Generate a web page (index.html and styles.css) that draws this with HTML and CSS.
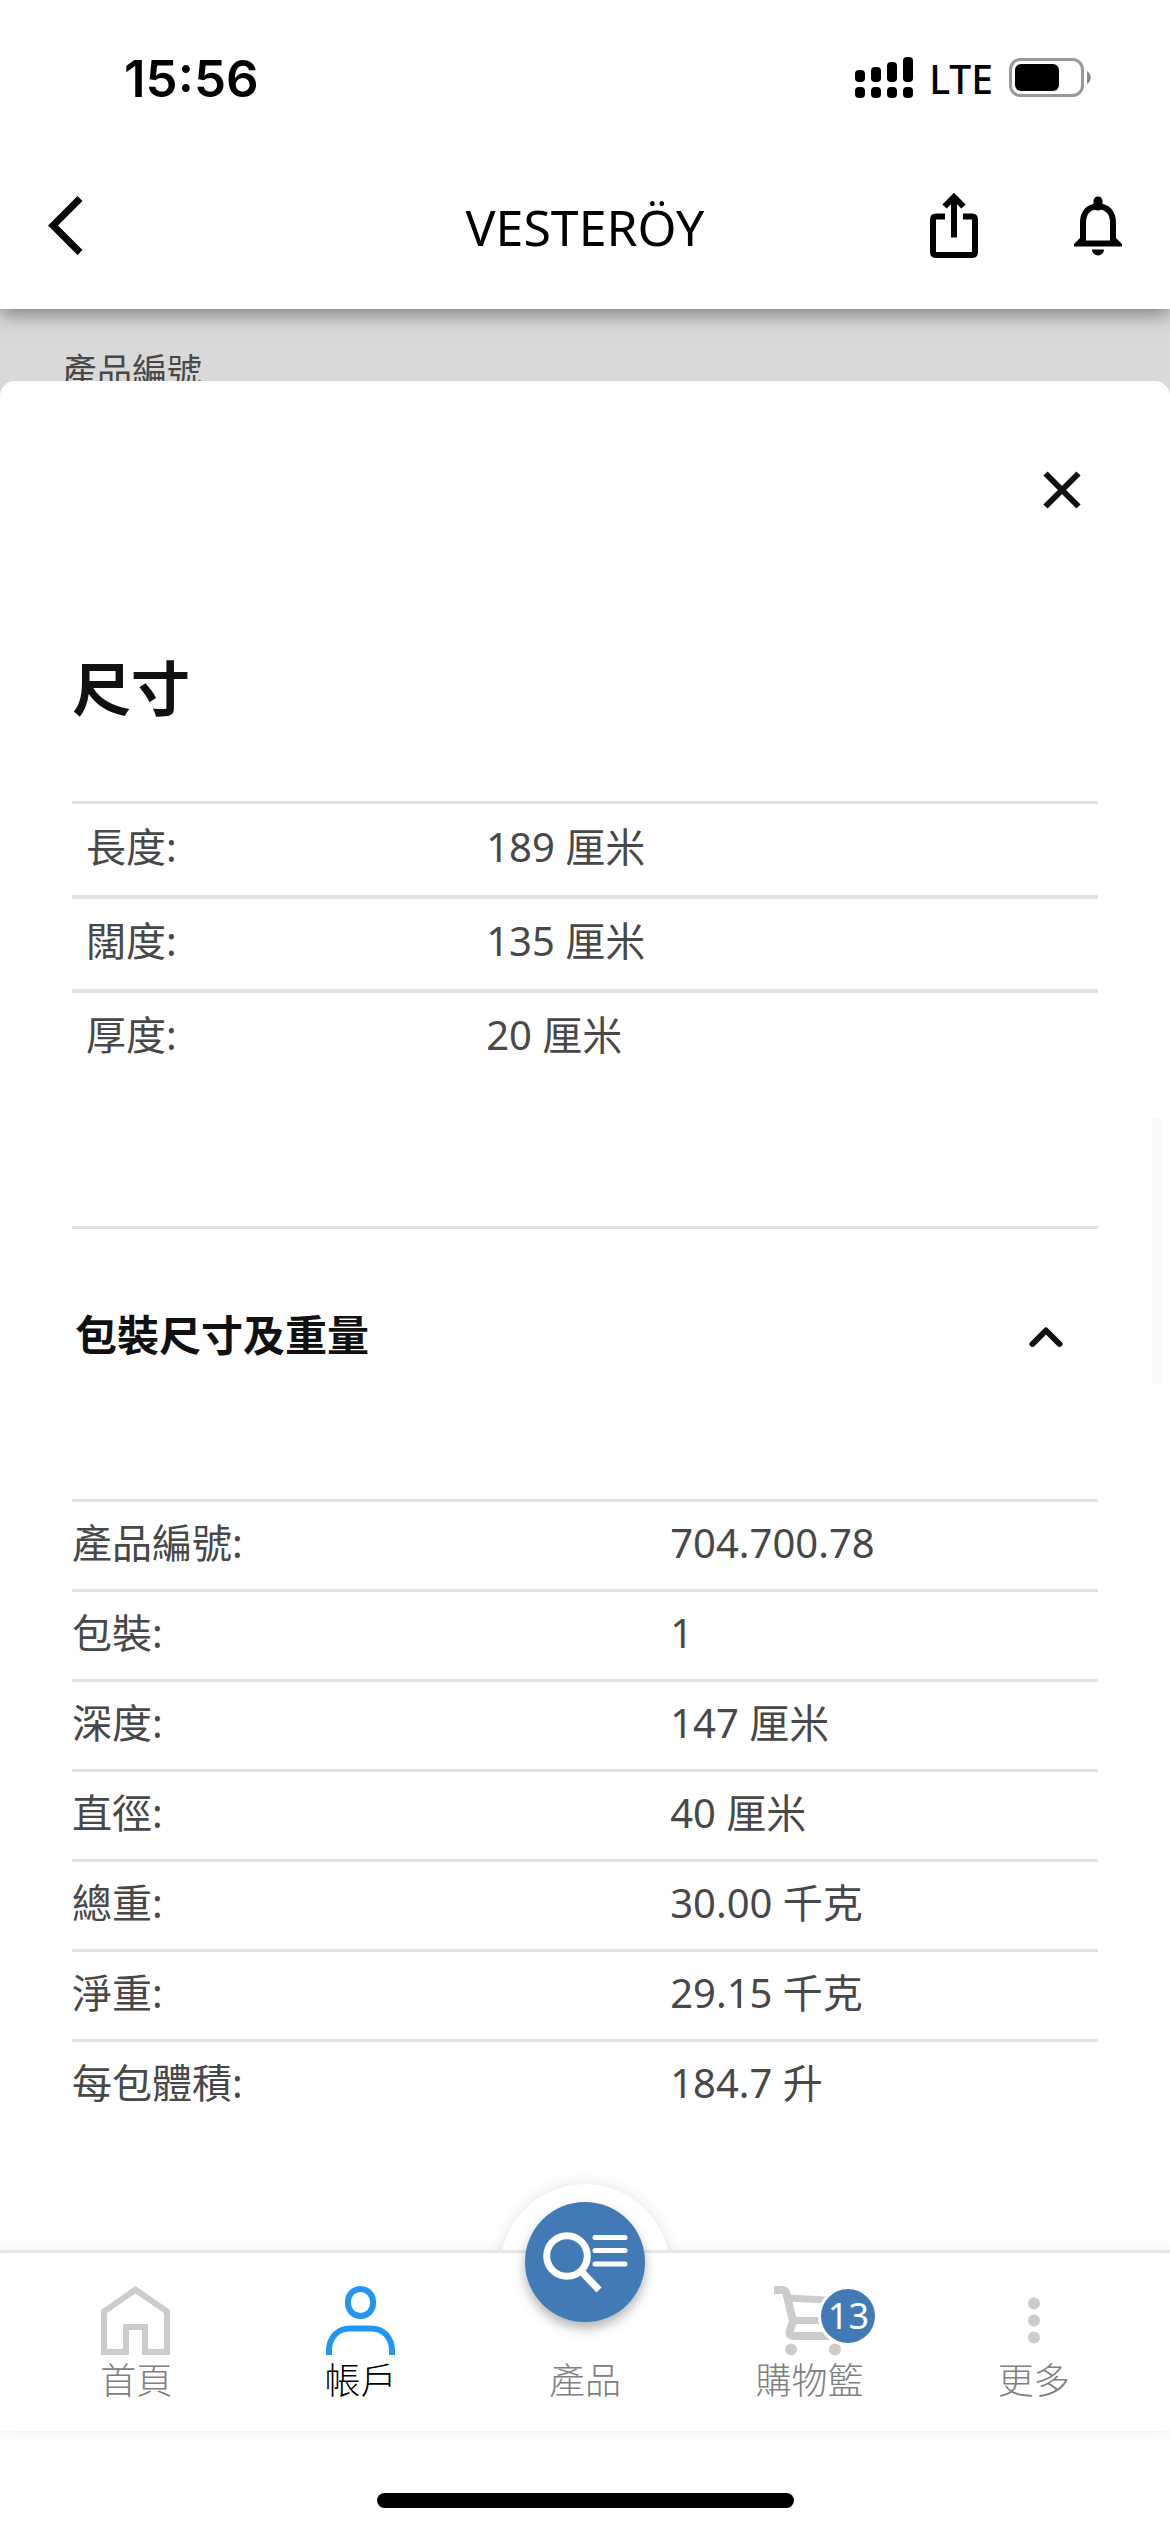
FILE: index.html
```html
<!DOCTYPE html>
<html lang="zh-Hant">
<head>
    <meta charset="UTF-8">
    <meta name="viewport" content="width=device-width, initial-scale=1.0">
    <title>VESTERÖY</title>
    <link rel="stylesheet" href="styles.css">
</head>
<body>
    <!-- Status bar -->
    <div class="status-bar">
        <span class="time">15:56</span>
        <div class="status-icons">
            <svg width="58" height="42" viewBox="0 0 58 42" aria-hidden="true">
                <rect x="0" y="13" width="10" height="12" rx="4"/>
                <rect x="16" y="10" width="10" height="15" rx="4"/>
                <rect x="32" y="5" width="10" height="20" rx="4"/>
                <rect x="48" y="0" width="10" height="25" rx="4"/>
                <rect x="0" y="30" width="10" height="11" rx="4"/>
                <rect x="16" y="30" width="10" height="11" rx="4"/>
                <rect x="32" y="30" width="10" height="11" rx="4"/>
                <rect x="48" y="30" width="10" height="11" rx="4"/>
            </svg>
            <span class="network">LTE</span>
            <svg width="83" height="40" viewBox="0 0 83 40" aria-hidden="true">
                <rect x="1.5" y="1.5" width="72" height="36" rx="10" fill="none" stroke="#999" stroke-width="3"/>
                <rect x="6" y="6" width="44" height="27" rx="6"/>
                <path d="M78 13c5 3 5 10 0 13z" fill="#888"/>
            </svg>
        </div>
    </div>

    <!-- Header -->
    <header class="header">
        <button type="button" class="icon-button" aria-label="返回">
            <svg width="60" height="72" viewBox="0 0 60 72">
                <path d="M38 7.500L11 34.500L38 61.500" fill="none" stroke="#000" stroke-width="7"/>
            </svg>
        </button>
        <h1>VESTERÖY</h1>
        <div class="header-actions">
            <button type="button" class="icon-button" aria-label="分享">
                <svg width="60" height="72" viewBox="0 0 60 72" fill="none" stroke="#000" stroke-width="6">
                    <path d="M21 25.500H12q-3 0-3 3V61q0 3 3 3H48q3 0 3-3V28.500q0-3-3-3H39"/>
                    <path d="M30 46.500V6M20.500 15.500L30 6L39.500 15.500"/>
                </svg>
            </button>
            <button type="button" class="icon-button" aria-label="通知">
                <svg width="60" height="72" viewBox="0 0 60 72">
                    <path d="M15 52V32C15 21 21 15.500 30 15.500S45 21 45 32V52" fill="none" stroke="#000" stroke-width="6"/>
                    <path d="M30 10V15" stroke="#000" stroke-width="9" stroke-linecap="round"/>
                    <path d="M6 55.500V53L13 46V49.500H47V46L54 53V55.500Z"/>
                    <path d="M24 58.500H36A6 6 0 0 1 24 58.500Z"/>
                </svg>
            </button>
        </div>
    </header>

    <!-- Page behind the sheet -->
    <div class="backdrop">
        <p>產品編號</p>
    </div>

    <!-- Size sheet -->
    <main class="sheet">
        <div class="sheet-top">
            <button type="button" class="icon-button" aria-label="關閉">
                <svg width="72" height="72" viewBox="0 0 72 72">
                    <path d="M19.500 19.500L52.500 52.500M52.500 19.500L19.500 52.500" stroke="#111" stroke-width="6"/>
                </svg>
            </button>
        </div>

        <h2>尺寸</h2>
        <table class="size-table">
            <tr>
                <th scope="row">長度:</th>
                <td>189 厘米</td>
            </tr>
            <tr>
                <th scope="row">闊度:</th>
                <td>135 厘米</td>
            </tr>
            <tr>
                <th scope="row">厚度:</th>
                <td>20 厘米</td>
            </tr>
        </table>

        <button type="button" class="accordion" id="packageToggle" aria-expanded="true" aria-controls="packageTable">
            <span>包裝尺寸及重量</span>
            <svg width="48" height="48" viewBox="0 0 48 48">
                <path d="M10.500 33L24 19.500L37.500 33" fill="none" stroke="#111" stroke-width="6" stroke-linecap="round" stroke-linejoin="round"/>
            </svg>
        </button>
        <table class="package-table" id="packageTable">
            <tr>
                <th scope="row">產品編號:</th>
                <td>704.700.78</td>
            </tr>
            <tr>
                <th scope="row">包裝:</th>
                <td>1</td>
            </tr>
            <tr>
                <th scope="row">深度:</th>
                <td>147 厘米</td>
            </tr>
            <tr>
                <th scope="row">直徑:</th>
                <td>40 厘米</td>
            </tr>
            <tr>
                <th scope="row">總重:</th>
                <td>30.00 千克</td>
            </tr>
            <tr>
                <th scope="row">淨重:</th>
                <td>29.15 千克</td>
            </tr>
            <tr>
                <th scope="row">每包體積:</th>
                <td>184.7 升</td>
            </tr>
        </table>
        <div class="scroll-thumb"></div>
    </main>

    <!-- Bottom navigation -->
    <footer class="bottom">
        <nav class="tabs">
            <a href="#home" class="tab">
                <svg width="70" height="70" viewBox="0 0 70 70" fill="none" stroke="#ccc" stroke-width="6">
                    <path d="M3 66V25.500L34.500 3.700L66 25.500V66H44V41H25V66Z"/>
                </svg>
                <span>首頁</span>
            </a>
            <a href="#account" class="tab active">
                <svg width="70" height="70" viewBox="0 0 70 70" fill="none" stroke="#2196f3" stroke-width="6">
                    <rect x="22" y="3" width="25" height="27" rx="12.500"/>
                    <path d="M3 69V65C3 51 12 42.500 24 42.500H45C57 42.500 66 51 66 65V69"/>
                </svg>
                <span>帳戶</span>
            </a>
            <a href="#products" class="tab tab-products">
                <span class="fab">
                    <svg width="120" height="120" viewBox="0 0 120 120" fill="none" stroke="#fff">
                        <circle cx="42" cy="54" r="20.300" stroke-width="7"/>
                        <path d="M56 69L74 88" stroke-width="7"/>
                        <path d="M70 35.500H100M70 48.500H100M70 62H100" stroke-width="5" stroke-linecap="round"/>
                    </svg>
                </span>
                <span>產品</span>
            </a>
            <a href="#cart" class="tab">
                <svg width="70" height="70" viewBox="0 0 70 70" fill="none" stroke="#ccc" stroke-width="8">
                    <path d="M0 4H8Q11.500 4 12.500 8L19 35L15.500 46Q15 50 20 50H62"/>
                    <path d="M14 12L69 15L61 34.500H19" stroke-width="7"/>
                    <circle cx="17" cy="63.500" r="6" fill="#ccc" stroke="none"/>
                    <circle cx="61" cy="63.500" r="6" fill="#ccc" stroke="none"/>
                </svg>
                <span>購物籃</span>
                <span class="badge">13</span>
            </a>
            <a href="#more" class="tab">
                <svg width="70" height="70" viewBox="0 0 70 70" fill="#ccc">
                    <circle cx="35" cy="17.500" r="6"/>
                    <circle cx="35" cy="34.500" r="6"/>
                    <circle cx="35" cy="51.500" r="6"/>
                </svg>
                <span>更多</span>
            </a>
        </nav>
        <div class="home-indicator"></div>
    </footer>

    <script>
        const packageToggle = document.getElementById("packageToggle");
        const packageTable = document.getElementById("packageTable");

        // Open and close the package section
        packageToggle.addEventListener("click", function () {
            const open = packageToggle.getAttribute("aria-expanded") === "true";
            packageToggle.setAttribute("aria-expanded", String(!open));
            packageTable.hidden = open;
        });
    </script>
</body>
</html>
```
FILE: styles.css
```css
/* Global styles */
* {
    box-sizing: border-box;
}
body {
    font-family: 'Noto Sans', 'Noto Sans CJK TC', sans-serif;
    margin: 0;
    min-height: 100vh;
    display: flex;
    flex-direction: column;
    background: #fff;
    color: #484848;
    font-size: 40px;
}
svg {
    display: block;
}
button {
    border: none;
    background: none;
    padding: 0;
    font-family: inherit;
    color: inherit;
    cursor: pointer;
}

/* Status bar */
.status-bar {
    position: relative;
    z-index: 2;
    height: 156px;
    padding: 0 78px 0 124px;
    display: flex;
    justify-content: space-between;
    align-items: center;
    background: #fff;
    color: #000;
}
.time {
    font-family: 'Inter', sans-serif;
    font-size: 51px;
    font-weight: 600;
}
.status-icons {
    display: flex;
    align-items: center;
    gap: 16px;
}
.network {
    font-size: 39px;
    font-weight: 500;
}

/* Header */
.header {
    position: relative;
    z-index: 1;
    height: 153px;
    padding: 0 42px 12px;
    display: grid;
    grid-template-columns: 1fr auto 1fr;
    align-items: center;
    background: #fff;
    box-shadow: 0 6px 18px rgba(0, 0, 0, 0.4);
}
h1 {
    margin: 0;
    color: #000;
    font-size: 50px;
    font-weight: 400;
}
.header .icon-button {
    justify-self: start;
}
.header-actions {
    display: flex;
    justify-content: flex-end;
    gap: 84px;
}

/* Page behind the sheet */
.backdrop {
    height: 87px;
    padding: 37px 62px 0;
    overflow: hidden;
    background: #d9d9d9;
}
.backdrop p {
    margin: 0;
    font-size: 35px;
    line-height: 50px;
}

/* Sheet */
.sheet {
    position: relative;
    z-index: 1;
    flex: 1;
    margin-top: -15px;
    padding: 73px 72px 0;
    border-radius: 15px 15px 0 0;
    background: #fff;
}
.sheet-top {
    display: flex;
    justify-content: flex-end;
}
h2 {
    margin: 120px 0 71px;
    color: #111;
    font-size: 59px;
    line-height: 84px;
    font-weight: 700;
}

/* Tables */
table {
    width: 100%;
    border-spacing: 0;
    table-layout: fixed;
}
th, td {
    height: 90px;
    padding: 0 0 6px;
    border-top: 3px solid #dfe1e6;
    font-weight: 400;
    line-height: 60px;
    text-align: left;
}
.package-table th {
    width: 58.3%;
}
.size-table th {
    width: 39%;
}
.size-table th, .size-table td {
    height: 94px;
    padding-left: 14px;
}
.size-table tr + tr th, .size-table tr + tr td {
    border-top-width: 4px;
}

/* Accordion */
.accordion {
    width: 100%;
    height: 215px;
    margin: 143px 0 58px;
    padding: 0 28px 0 3px;
    display: flex;
    justify-content: space-between;
    align-items: center;
    border-top: 3px solid #dfdfdf;
    color: #111;
    font-size: 42px;
    font-weight: 700;
}
.accordion span {
    padding-bottom: 6px;
}
.accordion[aria-expanded="false"] svg {
    transform: rotate(180deg);
}
.scroll-thumb {
    position: absolute;
    top: 737px;
    right: 9px;
    width: 9px;
    height: 267px;
    border-radius: 5px;
    background: #fafafa;
}

/* Bottom navigation */
.bottom {
    position: sticky;
    bottom: 0;
    z-index: 2;
    background: #fff;
}
.tabs {
    position: relative;
    height: 181px;
    padding: 33px 24px 0;
    display: flex;
    border-top: 3px solid #e7e7e7;
    box-shadow: 0 0 12px rgba(0, 0, 0, 0.08);
}
/* White bump round the products button, cut off at the bar */
.tabs::before {
    content: "";
    position: absolute;
    top: -69px;
    left: 50%;
    width: 170px;
    height: 170px;
    margin-left: -85px;
    border-radius: 50%;
    background: #fff;
    box-shadow: 0 0 14px rgba(0, 0, 0, 0.12);
    clip-path: inset(-20px -20px 104px -20px);
}
.tab {
    position: relative;
    flex: 1;
    display: flex;
    flex-direction: column;
    align-items: center;
    color: #808080;
    font-size: 36px;
    font-weight: 300;
    line-height: 50px;
    text-decoration: none;
}
.tab.active {
    color: #000;
}
.tab-products {
    padding-top: 70px;
}
.fab {
    position: absolute;
    top: -84px;
    left: 50%;
    width: 120px;
    height: 120px;
    margin-left: -60px;
    border-radius: 50%;
    background: #427ab5;
    box-shadow: 0 6px 12px rgba(0, 0, 0, 0.3);
}
.badge {
    position: absolute;
    top: 0;
    left: 50%;
    width: 60px;
    height: 60px;
    margin-left: 9px;
    border: 3px solid #fff;
    border-radius: 50%;
    background: #427ab5;
    color: #fff;
    font-weight: 400;
    line-height: 54px;
    text-align: center;
}
.home-indicator {
    width: 417px;
    height: 15px;
    margin: 62px auto 24px;
    border-radius: 8px;
    background: #000;
}
```
